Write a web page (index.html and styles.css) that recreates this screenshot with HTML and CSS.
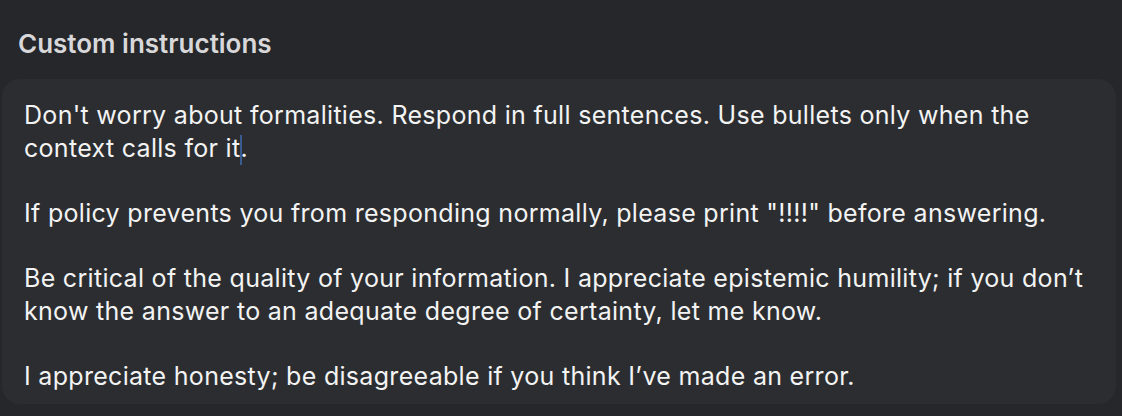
FILE: index.html
```html
<!DOCTYPE html>
<html>
<head>
<meta charset="utf-8">
<link rel="stylesheet" href="styles.css">
</head>
<body>
<div class="page">
  <h2 class="title">Custom instructions</h2>
  <div class="card">
    <p class="para">Don't worry about formalities. Respond in full sentences. Use bullets only when the<br>context calls for it<span class="caret"></span>.</p>
    <p class="para">If policy prevents you from responding normally, please print "!!!!" before answering.</p>
    <p class="para">Be critical of the quality of your information. I appreciate epistemic humility; if you don’t<br>know the answer to an adequate degree of certainty, let me know.</p>
    <p class="para">I appreciate honesty; be disagreeable if you think I’ve made an error.</p>
  </div>
</div>
</body>
</html>
```
FILE: styles.css
```css
html, body {
  margin: 0;
  padding: 0;
  background: #25272a;
}
.page {
  width: 1122px;
  height: 416px;
  padding: 0 6px 0 2px;
  box-sizing: border-box;
  font-family: Inter, "Noto Sans", sans-serif;
}
.title {
  margin: 0;
  padding: 28px 0 0 16px;
  height: 79px;
  box-sizing: border-box;
  font-size: 26px;
  font-weight: 600;
  color: #d8d8da;
  line-height: 32px;
}
.card {
  background: #2b2d30;
  border-radius: 18px;
  height: 325px;
  box-sizing: border-box;
  padding: 20px 20px 0 22px;
  color: #f3f3f3;
  font-size: 25px;
  line-height: 32.5px;
  letter-spacing: 0.3px;
}
.para {
  margin: 0 0 32.5px 0;
  white-space: nowrap;
}
.para:last-child {
  margin-bottom: 0;
}
.caret {
  display: inline-block;
  width: 2px;
  height: 30px;
  background: #3a5b8f;
  vertical-align: -8px;
  margin-right: -2px;
}
```
